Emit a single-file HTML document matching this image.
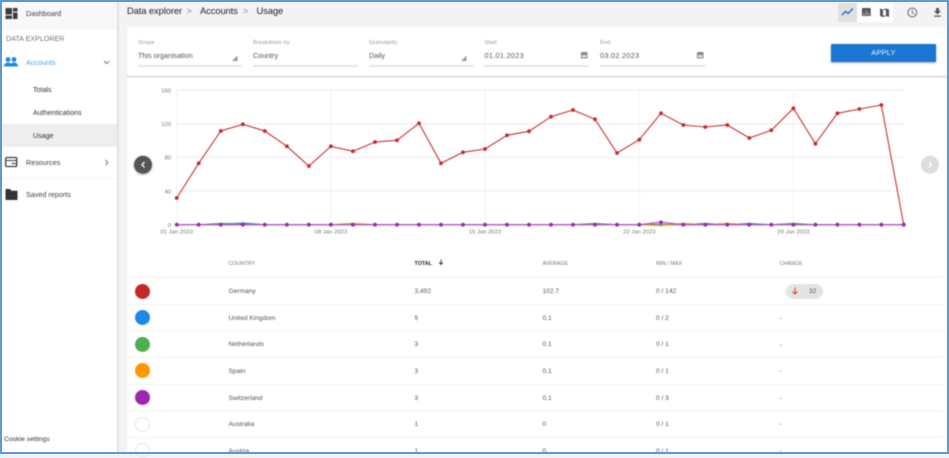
<!DOCTYPE html>
<html><head><meta charset="utf-8"><style>
html,body{margin:0;padding:0}
body{width:949px;height:454px;overflow:hidden;position:relative;background:#f3f3f3;font-family:"Liberation Sans",sans-serif;color:#555}
#p{position:absolute;left:0;top:0;width:949px;height:454px;filter:blur(.4px)}
.a{position:absolute}
.t{position:absolute;white-space:nowrap;line-height:10px;transform:translateY(calc(-50% + 1px))}
.nav{font-size:7.2px;color:#444}
.sub{font-size:7.1px;color:#333}
.lab{font-size:5.8px;color:#999}
.val{font-size:7.2px;color:#555}
.ul{position:absolute;height:2px;background:#e6e6e6;top:64.5px}
.h{font-size:5.4px;color:#777}
.c{font-size:6.6px;color:#555}
.b{font-size:9.4px;color:#222;letter-spacing:-.1px}
.r{position:absolute;left:127px;width:820px;height:1px;background:#f1f1f1}
.d{position:absolute;width:15px;height:15px;border-radius:50%;left:135px;box-sizing:border-box}
.ax{font:5.9px "Liberation Sans",sans-serif;fill:#777}
</style></head><body><div id="p">
<!-- sidebar -->
<div class="a" style="left:0;top:0;width:117px;height:454px;background:#fff"></div>
<div class="a" style="left:0;top:0;width:117px;height:30px;background:#f8f8f8"></div>
<div class="a" style="left:0;top:124px;width:117px;height:23px;background:#eee"></div>
<div class="a" style="left:0;top:178px;width:117px;height:1px;background:#f4f4f4"></div>
<div class="a" style="left:117px;top:0;width:2px;height:454px;background:#e2e2e2"></div>
<svg class="a" style="left:0;top:0" width="117" height="210">
<g fill="#3c3c3c"><rect x="5.5" y="8" width="6.5" height="6.5"/><rect x="5.5" y="15.5" width="6.5" height="3.5"/><rect x="13" y="8" width="4.5" height="3.5"/><rect x="13" y="12.5" width="4.5" height="6.5"/></g>
<g fill="#1e88e5"><circle cx="8" cy="59.5" r="2.4"/><circle cx="14" cy="59.5" r="2.4"/><path d="M4 66.500c0-2.800 2-4 4-4 1.200 0 2.200.4 3 1 .8-.6 1.800-1 3-1 2 0 4 1.200 4 4z"/></g>
<path d="M104 61l2.600 2.600 2.600-2.600" fill="none" stroke="#777" stroke-width="1"/>
<rect x="5.700" y="157.500" width="11" height="9" rx="1" fill="none" stroke="#3c3c3c" stroke-width="1.300"/><path d="M5.700 160.500h11M11.500 163.500h5" stroke="#3c3c3c" stroke-width="1.100" fill="none"/>
<path d="M105.300 160l2.600 2.600-2.600 2.600" fill="none" stroke="#777" stroke-width="1"/>
<path d="M5.500 189h4.500l1.500 1.800h6V200H5.500z" fill="#333"/>
</svg>
<div class="t nav" style="left:26px;top:13px">Dashboard</div>
<div class="t" style="left:6px;top:37.500px;font-size:7.150px;color:#777">DATA EXPLORER</div>
<div class="t nav" style="left:26px;top:61.500px;color:#42a5f5">Accounts</div>
<div class="t sub" style="left:33px;top:88.500px">Totals</div>
<div class="t sub" style="left:33px;top:112px">Authentications</div>
<div class="t sub" style="left:33px;top:135px">Usage</div>
<div class="t nav" style="left:26px;top:162px">Resources</div>
<div class="t nav" style="left:26px;top:193.500px">Saved reports</div>
<div class="t" style="left:4px;top:438.500px;font-size:6.700px;color:#333">Cookie settings</div>
<!-- top bar -->
<div class="t b" style="left:127px;top:10px">Data explorer</div>
<div class="t" style="left:186.500px;top:10px;font-size:9px;color:#888">&gt;</div>
<div class="t b" style="left:200px;top:10px">Accounts</div>
<div class="t" style="left:243px;top:10px;font-size:9px;color:#888">&gt;</div>
<div class="t b" style="left:256.500px;top:10px">Usage</div>
<div class="a" style="left:838px;top:3px;width:55px;height:19px;background:#fff;border-radius:2px"></div>
<div class="a" style="left:838px;top:3px;width:19px;height:19px;background:#e0e0e0;border-radius:2px 0 0 2px"></div>
<svg class="a" style="left:838px;top:0" width="111" height="26">
<path d="M4 15l3.500-3.500 2.500 2 5-5" fill="none" stroke="#1976d2" stroke-width="1.400"/>
<rect x="24" y="8" width="8.700" height="8" fill="#555"/><path d="M26 15.500v-2.500M28.300 15.500v-5M30.600 15.500v-3" stroke="#bbb" stroke-width="1"/>
<path d="M42 8.500l3 1 3-1 3 1V17l-3-1-3 1-3-1z" fill="#555"/><rect x="45" y="10" width="3" height="5.500" fill="#fff"/>
<circle cx="74.300" cy="12.500" r="4.400" fill="none" stroke="#666" stroke-width="1"/><path d="M74.300 10v2.800l2 1.200" fill="none" stroke="#666" stroke-width=".9"/>
<path d="M98 8h3v3h2l-3.500 3.500L96 11h2zM96.300 15.500h6.500v1.300h-6.500z" fill="#555"/>
</svg>
<!-- filter card -->
<div class="a" style="left:127px;top:27px;width:819.500px;height:49px;background:#fff;box-shadow:0 1px 1px #ccc"></div>
<div class="t lab" style="left:138px;top:41.500px">Scope</div><div class="t val" style="left:138px;top:54.500px">This organisation</div><div class="ul" style="left:137.500px;width:104.500px"></div>
<div class="t lab" style="left:253px;top:41.500px">Breakdown by</div><div class="t val" style="left:253px;top:54.500px">Country</div><div class="ul" style="left:253px;width:105px"></div>
<div class="t lab" style="left:369px;top:41.500px">Granularity</div><div class="t val" style="left:369px;top:54.500px">Daily</div><div class="ul" style="left:368.500px;width:105px"></div>
<div class="t lab" style="left:484.500px;top:41.500px">Start</div><div class="t val" style="left:484.500px;top:54.500px;letter-spacing:.35px">01.01.2023</div><div class="ul" style="left:484px;width:105px"></div>
<div class="t lab" style="left:600px;top:41.500px">End</div><div class="t val" style="left:600px;top:54.500px;letter-spacing:.35px">03.02.2023</div><div class="ul" style="left:600px;width:104.500px"></div>
<svg class="a" style="left:127px;top:40px" width="640" height="24">
<path d="M105 21l5.500-5.500V21zM334 21l5.500-5.500V21z" fill="#999"/>
<rect x="454" y="12" width="6.500" height="6.500" rx=".8" fill="#888"/><rect x="455" y="15" width="4.500" height="2.500" fill="#ddd"/>
<rect x="570" y="12" width="6.500" height="6.500" rx=".8" fill="#888"/><rect x="571" y="15" width="4.500" height="2.500" fill="#ddd"/>
</svg>
<div class="a" style="left:831px;top:44px;width:105px;height:18px;background:#1976d2;border-radius:1px;box-shadow:0 1px 2px #aaa;color:#e8f1fb;font-size:7.600px;line-height:17.500px;text-align:center;letter-spacing:.1px">APPLY</div>
<!-- main card -->
<div class="a" style="left:127px;top:78px;width:819.500px;height:374px;background:#fff"></div>
<svg class="a" style="left:0;top:0" width="949" height="454">
<defs>
<marker id="mr" markerUnits="userSpaceOnUse" markerWidth="6" markerHeight="6" refX="3" refY="3"><circle cx="3" cy="3" r="1.900" fill="#c62828"/></marker>
<marker id="mp" markerUnits="userSpaceOnUse" markerWidth="6" markerHeight="6" refX="3" refY="3"><circle cx="3" cy="3" r="1.900" fill="#9c27b0"/></marker>
</defs>
<g stroke="#f2f2f2" stroke-width="1.500" fill="none">
<path d="M176.700 90H903.700M176.700 123.700H903.700M176.700 157.400H903.700M176.700 191H903.700"/>
<path d="M176.700 90V224.700M330.900 90V224.700M485 90V224.700M639.300 90V224.700M793.400 90V224.700" stroke-width="1"/>
</g>
<g class="ax" text-anchor="end"><text x="171" y="92.300">160</text><text x="171" y="126">120</text><text x="171" y="159.700">80</text><text x="171" y="193.300">40</text><text x="171" y="227">0</text></g>
<g class="ax" text-anchor="middle"><text x="176.700" y="233.500">01 Jan 2023</text><text x="330.900" y="233.500">08 Jan 2023</text><text x="485" y="233.500">15 Jan 2023</text><text x="639.300" y="233.500">22 Jan 2023</text><text x="793.400" y="233.500">29 Jan 2023</text></g>
<polyline fill="none" stroke="#43a047" stroke-width="1.200" points="198.700,224.700 220.800,223.500 242.800,224 264.800,224.700 573,224.700 595,223.500 617,224.700 771,224.700 793.400,223.500 815.500,224.700"/>
<polyline fill="none" stroke="#1e88e5" stroke-width="1.200" points="220.800,224.700 242.800,223 264.800,224.700 683,224.700 705,223.500 727,224.700 749,223.500 771,224.700"/>
<polyline fill="none" stroke="#fb8c00" stroke-width="1.200" points="330.900,224.700 352.900,223.500 375,224.700 639.300,224.700 661,225.500 683,223.500 705,224.700 727,223.500 749,224.700"/>
<polyline fill="none" stroke="#c93232" stroke-width="1.100" marker-start="url(#mr)" marker-mid="url(#mr)" marker-end="url(#mr)" points="176.700,198 198.700,163.300 220.800,131 242.800,124.300 264.800,131 286.900,146.300 308.900,166 330.900,146.300 352.900,151.300 375,142 397,140.300 419,123.300 441,163.300 463,152.300 485,149 507,135.300 529,131.300 551,116.700 573,110 595,119.300 617,153 639.300,139.700 661,113.300 683.300,125 705.300,127 727.300,125 749.300,138 771.300,130.300 793.400,108.300 815.400,143.700 837.400,113.300 859.400,109 881.400,105 903.700,224.700"/>
<polyline fill="none" stroke="#b266c0" stroke-width="1.500" marker-start="url(#mp)" marker-mid="url(#mp)" marker-end="url(#mp)" points="176.700,224.700 198.700,224.700 220.800,224.700 242.800,224.700 264.800,224.700 286.900,224.700 308.900,224.700 330.900,224.700 352.900,224.700 375,224.700 397,224.700 419,224.700 441,224.700 463,224.700 485,224.700 507,224.700 529,224.700 551,224.700 573,224.700 595,224.700 617,224.700 639.300,224.700 661,222.300 683.300,224.700 705.300,224.700 727.300,224.700 749.300,224.700 771.300,224.700 793.400,224.700 815.400,224.700 837.400,224.700 859.400,224.700 881.400,224.700 903.700,224.700"/>
<circle cx="143" cy="164.700" r="9" fill="#555" style="filter:drop-shadow(0 1px 1px #aaa)"/><path d="M144.500 162l-2.500 2.700 2.500 2.700" fill="none" stroke="#fff" stroke-width="1.300"/>
<circle cx="930" cy="164.700" r="9" fill="#ddd"/><path d="M929 162l2.500 2.700-2.500 2.700" fill="none" stroke="#fff" stroke-width="1.300"/>
<path d="M441 259.500v5M439 262.300l2 2.200 2-2.200" fill="none" stroke="#333" stroke-width=".9"/>
</svg>
<!-- table -->
<div class="t h" style="left:228.500px;top:262.800px">COUNTRY</div>
<div class="t h" style="left:414.500px;top:262.800px;color:#222;font-weight:bold">TOTAL</div>
<div class="t h" style="left:542.500px;top:262.800px">AVERAGE</div>
<div class="t h" style="left:656px;top:262.800px">MIN / MAX</div>
<div class="t h" style="left:779.500px;top:262.800px">CHANGE</div>
<div class="r" style="top:277px"></div><div class="r" style="top:304px"></div><div class="r" style="top:331px"></div><div class="r" style="top:357px"></div><div class="r" style="top:384px"></div><div class="r" style="top:410px"></div><div class="r" style="top:437px"></div>
<div class="d" style="top:283.500px;background:#c62828"></div>
<div class="d" style="top:310.200px;background:#1e88e5"></div>
<div class="d" style="top:336.700px;background:#4caf50"></div>
<div class="d" style="top:363.200px;background:#ff9800"></div>
<div class="d" style="top:390px;background:#9c27b0"></div>
<div class="d" style="top:416.500px;border:1px solid #e4e4e4"></div>
<div class="d" style="top:443px;border:1px solid #e4e4e4"></div>
<div class="t c" style="left:228.500px;top:291px">Germany</div><div class="t c" style="left:414.500px;top:291px">3,492</div><div class="t c" style="left:542.500px;top:291px">102.7</div><div class="t c" style="left:656px;top:291px">0 / 142</div>
<div class="a" style="left:785.500px;top:283.500px;width:37px;height:15.500px;border-radius:8px;background:#e4e4e4"></div>
<svg class="a" style="left:790px;top:287px" width="10" height="9"><path d="M5 .5v6.500M2.500 4.500L5 7l2.500-2.500" fill="none" stroke="#e53935" stroke-width="1"/></svg>
<div class="t c" style="left:809px;top:291px">32</div>
<div class="t c" style="left:228.500px;top:317.700px">United Kingdom</div><div class="t c" style="left:414.500px;top:317.700px">5</div><div class="t c" style="left:542.500px;top:317.700px">0.1</div><div class="t c" style="left:656px;top:317.700px">0 / 2</div><div class="t c" style="left:779.500px;top:318px">-</div>
<div class="t c" style="left:228.500px;top:344.200px">Netherlands</div><div class="t c" style="left:414.500px;top:344.200px">3</div><div class="t c" style="left:542.500px;top:344.200px">0.1</div><div class="t c" style="left:656px;top:344.200px">0 / 1</div><div class="t c" style="left:779.500px;top:344.500px">-</div>
<div class="t c" style="left:228.500px;top:370.700px">Spain</div><div class="t c" style="left:414.500px;top:370.700px">3</div><div class="t c" style="left:542.500px;top:370.700px">0.1</div><div class="t c" style="left:656px;top:370.700px">0 / 1</div><div class="t c" style="left:779.500px;top:371px">-</div>
<div class="t c" style="left:228.500px;top:397.500px">Switzerland</div><div class="t c" style="left:414.500px;top:397.500px">3</div><div class="t c" style="left:542.500px;top:397.500px">0.1</div><div class="t c" style="left:656px;top:397.500px">0 / 3</div><div class="t c" style="left:779.500px;top:397.800px">-</div>
<div class="t c" style="left:228.500px;top:424px">Australia</div><div class="t c" style="left:414.500px;top:424px">1</div><div class="t c" style="left:542.500px;top:424px">0</div><div class="t c" style="left:656px;top:424px">0 / 1</div><div class="t c" style="left:779.500px;top:424.300px">-</div>
<div class="t c" style="left:228.500px;top:450.500px">Austria</div><div class="t c" style="left:414.500px;top:450.500px">1</div><div class="t c" style="left:542.500px;top:450.500px">0</div><div class="t c" style="left:656px;top:450.500px">0 / 1</div><div class="t c" style="left:779.500px;top:450.800px">-</div>
</div>
<!-- outer frame -->
<div class="a" style="left:0;top:0;width:949px;height:2px;background:#5b9bd5"></div>
<div class="a" style="left:0;top:452px;width:949px;height:2px;background:#5b9bd5"></div>
<div class="a" style="left:0;top:0;width:2px;height:454px;background:#5b9bd5"></div>
<div class="a" style="left:946.500px;top:0;width:2.500px;height:454px;background:#5b9bd5"></div>
</body></html>
